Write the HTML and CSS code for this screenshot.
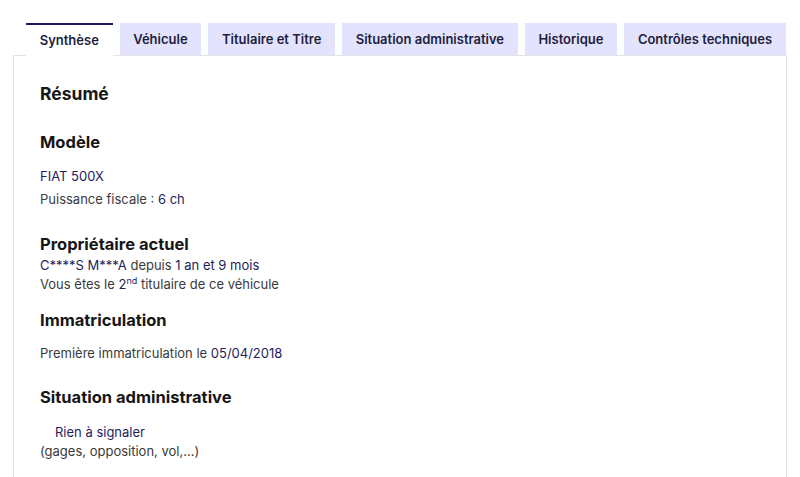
FILE: index.html
```html
<!DOCTYPE html>
<html lang="fr">
<head>
    <meta charset="UTF-8">
    <meta name="viewport" content="width=device-width, initial-scale=1.0">
    <title>Synthèse du véhicule</title>
    <link rel="stylesheet" href="styles.css">
</head>
<body>
    <div class="tabs-wrap">
        <ul class="tabs">
            <li class="tab active">Synthèse</li>
            <li class="tab">Véhicule</li>
            <li class="tab">Titulaire et Titre</li>
            <li class="tab">Situation administrative</li>
            <li class="tab">Historique</li>
            <li class="tab">Contrôles techniques</li>
        </ul>

        <div class="panel">
            <h2 class="title">Résumé</h2>

            <section class="block model">
                <h3>Modèle</h3>
                <p class="value">FIAT 500X</p>
                <p>Puissance fiscale : <span class="value">6 ch</span></p>
            </section>

            <section class="block owner">
                <h3>Propriétaire actuel</h3>
                <p class="tight"><span class="value">C****S M***A</span> depuis <span class="value">1 an et 9 mois</span></p>
                <p class="tight">Vous êtes le <span class="value">2<sup>nd</sup></span> titulaire de ce véhicule</p>
            </section>

            <section class="block reg">
                <h3>Immatriculation</h3>
                <p>Première immatriculation le <span class="value">05/04/2018</span></p>
            </section>

            <section class="block admin">
                <h3>Situation administrative</h3>
                <p class="tight value status">Rien à signaler</p>
                <p class="tight">(gages, opposition, vol,...)</p>
            </section>
        </div>
    </div>
</body>
</html>
```

FILE: styles.css
```css
body {
    margin: 0;
    font-family: Inter, "Open Sans", Arial, sans-serif;
    color: #3a3a3a;
    background: #fff;
    overflow: hidden;
}
.tabs-wrap {
    padding: 23px 13px 0 13px;
}
/* Tab bar */
.tabs {
    list-style: none;
    margin: 0;
    padding: 0 0 0 13px;
    display: flex;
    gap: 7px;
}
.tab {
    background: #e3e3fd;
    color: #1e1e3c;
    font-size: 13px;
    font-weight: 600;
    height: 32px;
    line-height: 32px;
    padding: 0 13.7px;
    box-sizing: border-box;
    white-space: nowrap;
}
.tab.active {
    background: #fff;
    border-top: 2px solid #1b1b5e;
    line-height: 30px;
    position: relative;
    margin-bottom: -1px;
    height: 33px;
}
/* Content panel */
.panel {
    border: 1px solid #e3e3e3;
    border-bottom: none;
    padding: 23px 27px 20px 26px;
    height: 422px;
    box-sizing: border-box;
}
.title {
    margin: 0 0 19px;
    font-size: 17.5px;
    font-weight: 700;
    color: #161616;
    line-height: 30px;
}
.block h3 {
    margin: 0;
    font-size: 16.5px;
    font-weight: 700;
    color: #161616;
    line-height: 28px;
}
.block p {
    margin: 0;
    font-size: 13px;
    line-height: 20px;
}
.block p.tight {
    line-height: 19px;
}
.value {
    color: #1e1e5a;
}
.model h3 {
    margin-bottom: 10px;
}
.model p + p {
    margin-top: 3px;
}
.owner {
    margin-top: 21px;
}
.owner h3 {
    margin-bottom: -2px;
}
.reg {
    margin-top: 12px;
}
.reg h3 {
    margin-bottom: 9px;
}
.admin {
    margin-top: 20px;
}
.admin h3 {
    margin-bottom: 12px;
}
.status {
    padding-left: 15px;
}
sup {
    font-size: 9px;
    line-height: 0;
}
```
